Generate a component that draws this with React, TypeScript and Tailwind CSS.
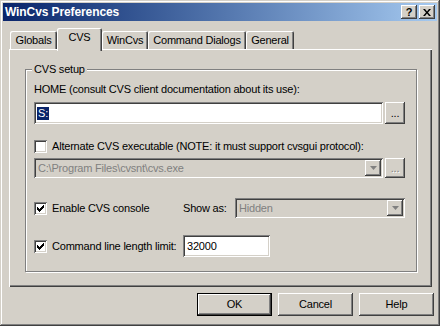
import React from 'react';

const face = 'bg-[#d4d0c8]';
const raised = 'shadow-[inset_-1px_-1px_#404040,inset_1px_1px_#ffffff,inset_-2px_-2px_#808080,inset_2px_2px_#d4d0c8]';
const sunken = 'shadow-[inset_1px_1px_#808080,inset_-1px_-1px_#ffffff,inset_2px_2px_#404040,inset_-2px_-2px_#d4d0c8]';

const Check = ({ checked }: { checked?: boolean }) => (
  <div className={`w-[13px] h-[13px] shrink-0 bg-white flex items-center justify-center ${sunken}`}>
    {checked && (
      <svg width="7" height="7" viewBox="0 0 7 7">
        <path d="M0 2h1v1h1v1h1V3h1V2h1V1h1V0h1v3H6v1H5v1H4v1H3v1H2V6H1V5H0z" fill="#000" />
      </svg>
    )}
  </div>
);

const Arrow = ({ disabled }: { disabled?: boolean }) => (
  <div className={`w-[16px] h-full ${face} ${raised} flex items-center justify-center`}>
    <svg width="7" height="4" viewBox="0 0 7 4">
      <path d="M0 0h7L3.5 4z" fill={disabled ? '#808080' : '#000'} />
    </svg>
  </div>
);

const Tab = ({ label, w, active }: { label: string; w: string; active?: boolean }) => (
  <div
    className={`${w} ${face} flex justify-center rounded-t-[2px] shadow-[inset_1px_1px_#ffffff,inset_-1px_0_#404040,inset_-2px_0_#808080] ${
      active ? 'h-[23px] -mb-[2px] relative z-10 pt-[3px]' : 'h-[18px] pt-[3px]'
    }`}
  >
    {label}
  </div>
);

const Button = ({ label, def }: { label: string; def?: boolean }) => (
  <div
    className={`w-[75px] h-[23px] flex items-center justify-center ${face} ${
      def
        ? 'shadow-[inset_0_0_0_1px_#000000,inset_-2px_-2px_#404040,inset_2px_2px_#ffffff,inset_-3px_-3px_#808080]'
        : raised
    }`}
  >
    {label}
  </div>
);

export default function App() {
  return (
    <div
      className={`w-[440px] h-[326px] ${face} p-[3px] flex flex-col text-[11px] leading-[13px] tracking-[-0.2px] text-black shadow-[inset_-1px_-1px_#404040,inset_1px_1px_#d4d0c8,inset_-2px_-2px_#808080,inset_2px_2px_#ffffff]`}
      style={{ fontFamily: '"Liberation Sans", Arial, sans-serif' }}
    >
      {/* title bar */}
      <div className="h-[18px] flex items-center bg-gradient-to-r from-[#0a246a] to-[#a6caf0] pl-[2px] pr-[2px]">
        <span className="text-white font-bold text-[12px] tracking-[-0.1px] flex-1">WinCvs Preferences</span>
        <div className={`w-[16px] h-[14px] ${face} ${raised} flex items-center justify-center font-bold text-[11px]`}>?</div>
        <div className={`w-[16px] h-[14px] ml-[2px] ${face} ${raised} flex items-center justify-center`}>
          <svg width="8" height="7" viewBox="0 0 8 7">
            <path d="M0 0h2l2 2.5L6 0h2L5 3.5 8 7H6L4 4.5 2 7H0l3-3.5z" fill="#000" />
          </svg>
        </div>
      </div>

      {/* tabs */}
      <div className="ml-[6px] mt-[7px] h-[21px] flex items-end pl-[1px]">
        <Tab label="Globals" w="w-[47px]" />
        <Tab label="CVS" w="w-[45px]" active />
        <Tab label="WinCvs" w="w-[46px]" />
        <Tab label="Command Dialogs" w="w-[98px]" />
        <Tab label="General" w="w-[48px]" />
      </div>

      {/* panel */}
      <div className={`ml-[6px] w-[423px] h-[238px] ${face} shadow-[inset_1px_1px_#ffffff,inset_-1px_-1px_#404040,inset_-2px_-2px_#808080] pt-[20px] pl-[16px]`}>
        <div className="relative w-[392px] h-[203px] border border-[#808080] shadow-[inset_1px_1px_#ffffff,1px_1px_#ffffff] pl-[8px]">
          <span className={`absolute -top-[7px] left-[6px] px-[2px] ${face}`}>CVS setup</span>

          <div className="pt-[13px]">HOME (consult CVS client documentation about its use):</div>

          <div className="mt-[6px] flex gap-[2px]">
            <div className={`w-[349px] h-[22px] bg-white ${sunken} flex items-center pl-[3px]`}>
              <span className="bg-[#0a246a] text-white px-[1px]">S:</span>
            </div>
            <div className={`w-[20px] h-[22px] ${face} ${raised} flex items-center justify-center`}>...</div>
          </div>

          <div className="mt-[16px] flex items-center gap-[5px]">
            <Check />
            <span>Alternate CVS executable (NOTE: it must support cvsgui protocol):</span>
          </div>

          <div className="mt-[5px] flex gap-[2px]">
            <div className={`w-[349px] h-[20px] ${face} ${sunken} flex items-center pl-[4px] pr-[2px] py-[2px]`}>
              <span className="flex-1 text-[#808080]">C:\Program Files\cvsnt\cvs.exe</span>
              <Arrow disabled />
            </div>
            <div className={`w-[20px] h-[20px] ${face} ${raised} flex items-center justify-center text-[#808080] [text-shadow:1px_1px_#ffffff]`}>...</div>
          </div>

          <div className="mt-[20px] h-[20px] flex items-center">
            <Check checked />
            <span className="ml-[5px] w-[131px]">Enable CVS console</span>
            <span className="w-[52px]">Show as:</span>
            <div className={`w-[170px] h-[20px] ${face} ${sunken} flex items-center pl-[4px] pr-[2px] py-[2px]`}>
              <span className="flex-1 text-[#808080]">Hidden</span>
              <Arrow disabled />
            </div>
          </div>

          <div className="mt-[17px] h-[22px] flex items-center">
            <Check checked />
            <span className="ml-[5px] w-[131px]">Command line length limit:</span>
            <div className={`w-[87px] h-[22px] bg-white ${sunken} flex items-center pl-[4px]`}>32000</div>
          </div>
        </div>
      </div>

      {/* buttons */}
      <div className="mt-[6px] flex justify-end gap-[6px] pr-[3px]">
        <Button label="OK" def />
        <Button label="Cancel" />
        <Button label="Help" />
      </div>
    </div>
  );
}
